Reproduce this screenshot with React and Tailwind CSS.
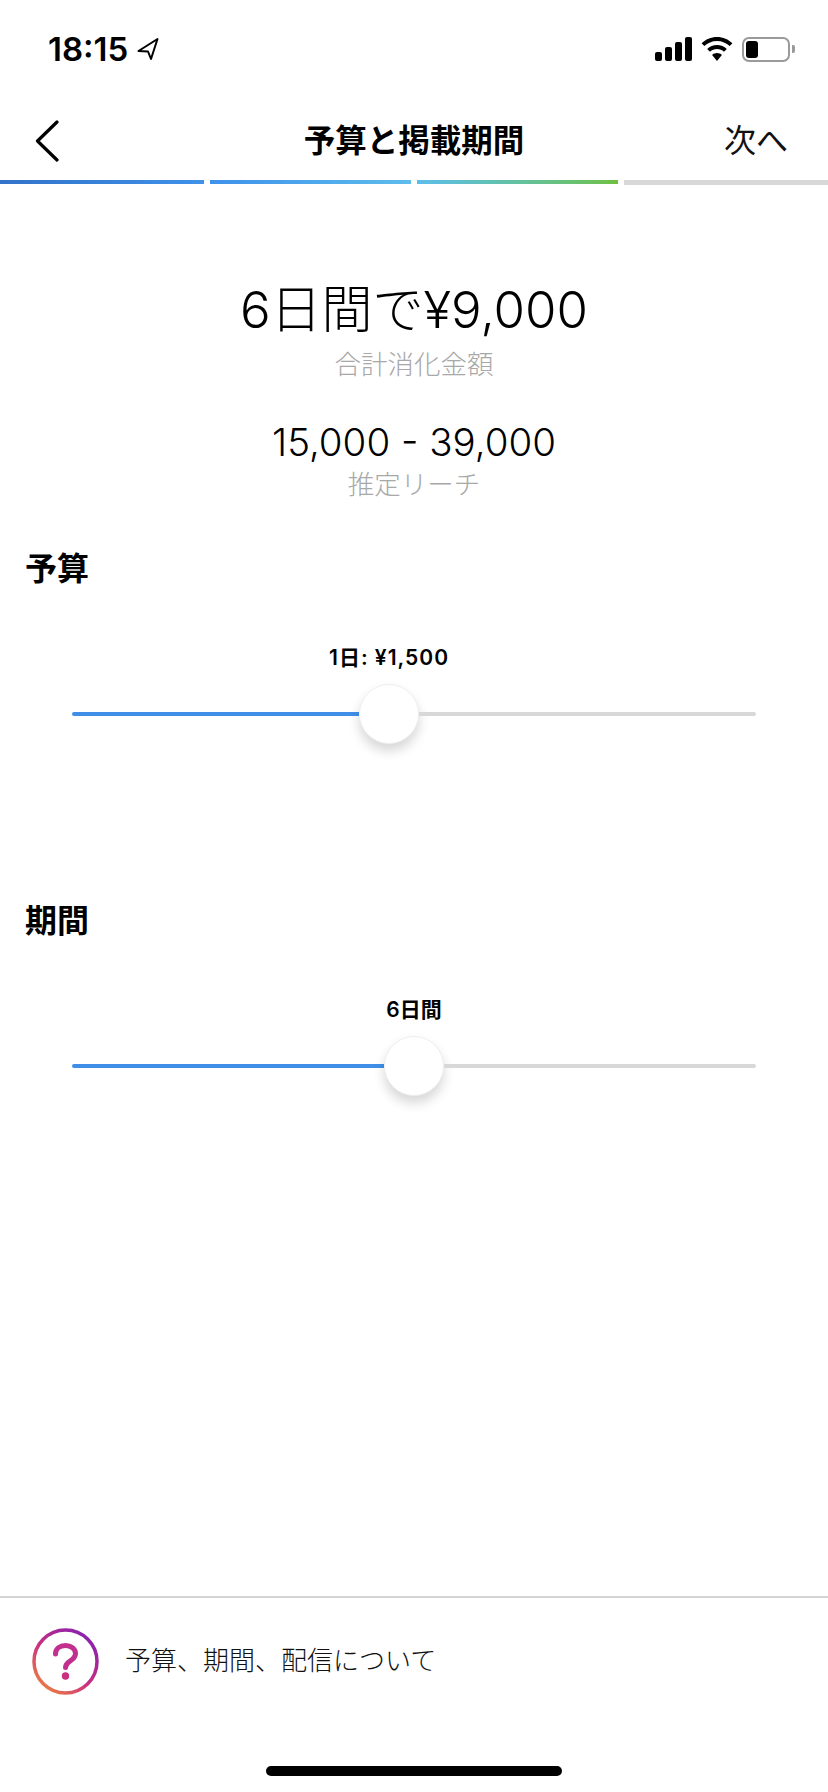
const FONT = "font-['Inter','Noto_Sans_CJK_JP',sans-serif]";

function StatusBar() {
  return (
    <div className="h-[90px] flex items-start justify-between pl-[48px] pr-[33px] pt-[31px]">
      <div className="flex items-center gap-[9px] h-[36px]">
        <span className="text-[33px] leading-[36px] font-semibold text-black">18:15</span>
        <svg width="22" height="24" viewBox="0 0 22 24" fill="none" stroke="#000" strokeWidth="2" strokeLinejoin="round">
          <path d="M1.500 14 20.500 2 14 22 11 14.500Z" />
        </svg>
      </div>
      <div className="flex items-center gap-[9px] h-[36px]">
        <svg width="37" height="24" viewBox="0 0 37 24" fill="#000">
          <rect x="0" y="15" width="7" height="9" rx="2" />
          <rect x="10" y="10" width="7" height="14" rx="2" />
          <rect x="20" y="5" width="7" height="19" rx="2" />
          <rect x="30" y="0" width="7" height="24" rx="2" />
        </svg>
        <svg width="32" height="24" viewBox="0 0 32 24" fill="#000">
          <path d="M16 0C10 0 4.600 2.400 .6 6.300l2.700 2.800C6.600 5.900 11 3.900 16 3.900s9.400 2 12.700 5.200l2.700-2.800C27.400 2.400 22 0 16 0Z" />
          <path d="M16 8c-3.800 0-7.200 1.500-9.800 3.900l2.800 2.800C10.800 13 13.300 12 16 12s5.200 1 7 2.700l2.800-2.800C23.200 9.500 19.800 8 16 8Z" />
          <path d="M16 16c-1.900 0-3.600.7-4.900 1.900L16 24l4.900-6.100C19.600 16.700 17.900 16 16 16Z" />
        </svg>
        <div className="flex items-center gap-[2px]">
          <div className="w-[48px] h-[25px] rounded-[7px] border-2 border-[#9a9a9a] p-[2px] flex">
            <div className="w-[12px] bg-black rounded-[3px]" />
          </div>
          <div className="w-[3px] h-[8px] bg-[#9a9a9a] rounded-r-[2px]" />
        </div>
      </div>
    </div>
  );
}

function NavBar() {
  return (
    <div className="h-[90px] grid grid-cols-[1fr_auto_1fr] items-center px-[35px] pt-[11px]">
      <svg width="24" height="42" viewBox="0 0 24 42" fill="none" stroke="#000" strokeWidth="3.200" strokeLinecap="round" strokeLinejoin="round">
        <path d="M22 2 2.500 21 22 40" />
      </svg>
      <div className="text-[31.5px] leading-[40px] font-bold text-black">予算と掲載期間</div>
      <div className="text-[32px] leading-[40px] font-normal text-[#111] text-right pr-[5px]">次へ</div>
    </div>
  );
}

function Progress() {
  return (
    <div className="flex gap-[6px] h-[5px]">
      <div className="h-[4px] w-[204px] bg-gradient-to-r from-[#3273c9] to-[#3f91ea]" />
      <div className="h-[4px] w-[201px] bg-gradient-to-r from-[#3f91ea] to-[#5dbdeb]" />
      <div className="h-[4px] w-[201px] bg-gradient-to-r from-[#5dbdeb] to-[#6fc03f]" />
      <div className="h-[5px] flex-1 bg-[#d8d8d8]" />
    </div>
  );
}

function Slider({ title, label, left, sectionClass, labelClass }) {
  return (
    <section className={sectionClass}>
      <h2 className="pl-[25px] text-[32px] leading-[40px] font-bold text-black">{title}</h2>
      <div
        className={`ml-[72px] mt-[55px] text-center text-[21px] leading-[28px] font-semibold text-black ${labelClass}`}
        style={{ width: (left + 30) * 2 }}
      >
        {label}
      </div>
      <div className="mx-[72px] mt-[12px] flex items-center h-[60px]">
        <div className="h-[4px] bg-[#3f8fe8] rounded-l-[2px]" style={{ width: left }} />
        <div className="w-[60px] h-[60px] shrink-0 rounded-full bg-white border border-[#efefef] shadow-[0_7px_12px_rgba(0,0,0,0.16)]" />
        <div className="h-[4px] flex-1 bg-[#d8d8d8] rounded-r-[2px]" />
      </div>
    </section>
  );
}

export default function App() {
  return (
    <div className={`${FONT} relative w-[828px] h-[1792px] bg-white flex flex-col overflow-hidden`}>
      <StatusBar />
      <NavBar />
      <Progress />
      <div className="flex flex-col items-center pt-[98px]">
        <div className="text-[51px] leading-[54px] font-light text-black">6日間で¥9,000</div>
        <div className="text-[26.5px] leading-[36px] mt-[9px] text-[#a8a8a8] font-light">合計消化金額</div>
        <div className="text-[38.5px] leading-[44px] mt-[38px] font-light text-black">15,000 - 39,000</div>
        <div className="text-[26.5px] leading-[36px] mt-[2px] text-[#a8a8a8] font-light">推定リーチ</div>
      </div>
      <Slider sectionClass="mt-[47px]" title="予算" label="1日: ¥1,500" left={287} labelClass="tracking-[1px]" />
      <Slider sectionClass="mt-[157px]" title="期間" label="6日間" left={312} labelClass="tracking-[0px]" />
      <div className="mt-auto">
        <div className="h-[2px] bg-[#d4d4d4]" />
        <div className="h-[126px] flex items-center pl-[32px] gap-[26px]">
          <svg width="67" height="67" viewBox="0 0 67 67" fill="none">
            <defs>
              <linearGradient id="ig" x1="0.1" y1="1" x2="0.9" y2="0">
                <stop offset="0" stopColor="#f08a3c" />
                <stop offset="0.45" stopColor="#c9307f" />
                <stop offset="1" stopColor="#7f1fb5" />
              </linearGradient>
            </defs>
            <circle cx="33.500" cy="33.500" r="31.500" stroke="url(#ig)" strokeWidth="3.500" />
            <path d="M23.500 26c0-5.500 4.500-8.500 10-8.500S43.500 21 43.500 25.500c0 3.800-2.500 5.600-5.200 7.300-2.800 1.800-4.800 3.300-4.800 6.700" stroke="#c12f8f" strokeWidth="5" strokeLinecap="round" />
            <circle cx="33.500" cy="48" r="3.700" fill="#c9307f" />
          </svg>
          <div className="text-[26px] leading-[32px] font-light text-[#111] mb-[1px]">予算、期間、配信について</div>
        </div>
        <div className="h-[68px] flex justify-center pt-[42px]">
          <div className="w-[296px] h-[10px] rounded-full bg-black" />
        </div>
      </div>
    </div>
  );
}
